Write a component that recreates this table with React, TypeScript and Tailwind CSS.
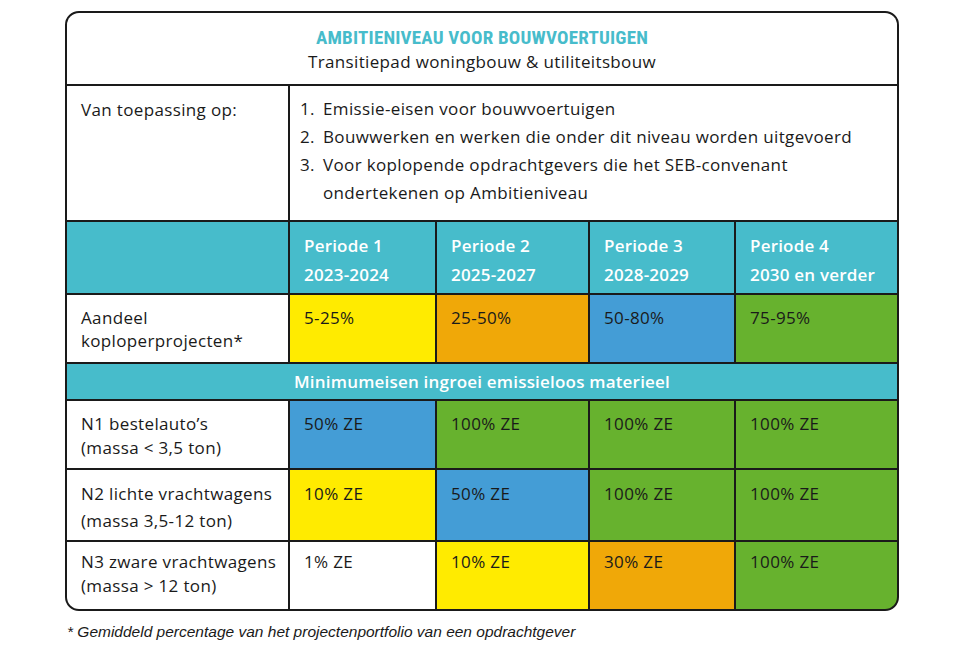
import React from "react";

const cyan = "bg-[#47bccb]";

function Cell({ className = "", children }: { className?: string; children?: React.ReactNode }) {
  return <div className={`pl-[14px] pr-1 ${className}`}>{children}</div>;
}

export default function App() {
  return (
    <div className="w-[960px] h-[665px] bg-white relative" style={{ fontFamily: '"Open Sans", "Liberation Sans", sans-serif' }}>
      <div className="pt-[11px] pl-[65px]">
        <div className="w-[834px] h-[600px] border-2 border-[#1a1a1a] rounded-[14px] overflow-hidden flex flex-col bg-[#1a1a1a]">
          <div className="h-[71px] bg-white flex flex-col items-center pt-[13px]">
            <div
              className="text-[#47bccb] font-bold text-[19px] leading-[24px] tracking-[0.2px]"
              style={{ fontFamily: '"Liberation Sans Narrow", "Roboto Condensed", "DejaVu Sans Condensed", sans-serif' }}
            >
              AMBITIENIVEAU VOOR BOUWVOERTUIGEN
            </div>
            <div className="text-[17px] tracking-[0.35px] leading-[24px] text-[#1a1a1a]">Transitiepad woningbouw &amp; utiliteitsbouw</div>
          </div>
          <div className="mt-[2px] grid grid-cols-[221px_145px_151px_144px_1fr] grid-rows-[134px_71px_67px_35px_67px_70px_67px] gap-[2px] text-[#1a1a1a] text-[17px] tracking-[0.35px]">
            <Cell className="bg-white pt-[10px] leading-[28px]">Van toepassing op:</Cell>
            <div className="col-span-4 bg-white pl-[10px] pt-[9px] leading-[28px]">
              <div className="flex"><span className="w-[23px]">1.</span><span>Emissie-eisen voor bouwvoertuigen</span></div>
              <div className="flex"><span className="w-[23px]">2.</span><span>Bouwwerken en werken die onder dit niveau worden uitgevoerd</span></div>
              <div className="flex"><span className="w-[23px] shrink-0">3.</span><span>Voor koplopende opdrachtgevers die het SEB-convenant<br />ondertekenen op Ambitieniveau</span></div>
            </div>

            <div className={cyan}></div>
            {[
              ["Periode 1", "2023-2024"],
              ["Periode 2", "2025-2027"],
              ["Periode 3", "2028-2029"],
              ["Periode 4", "2030 en verder"],
            ].map(([a, b]) => (
              <Cell key={a} className={`${cyan} text-white font-semibold pt-[9px] leading-[29px] tracking-[0.2px]`}>
                <div>{a}</div>
                <div className="whitespace-nowrap">{b}</div>
              </Cell>
            ))}

            <Cell className="bg-white pt-[11px] leading-[23px]">
              <div>Aandeel</div>
              <div>koploperprojecten*</div>
            </Cell>
            <Cell className="bg-[#ffeb00] pt-[11px] leading-[23px]">5-25%</Cell>
            <Cell className="bg-[#f0a808] pt-[11px] leading-[23px]">25-50%</Cell>
            <Cell className="bg-[#449dd6] pt-[11px] leading-[23px]">50-80%</Cell>
            <Cell className="bg-[#67b22e] pt-[11px] leading-[23px]">75-95%</Cell>

            <div className={`col-span-5 ${cyan} text-white font-semibold flex items-center justify-center leading-[24px] tracking-[0.2px]`}>
              Minimumeisen ingroei emissieloos materieel
            </div>

            <Cell className="bg-white pt-[11px] leading-[24px]">
              <div>N1 bestelauto’s</div>
              <div>(massa &lt; 3,5 ton)</div>
            </Cell>
            <Cell className="bg-[#449dd6] pt-[11px] leading-[24px]">50% ZE</Cell>
            <Cell className="bg-[#67b22e] pt-[11px] leading-[24px]">100% ZE</Cell>
            <Cell className="bg-[#67b22e] pt-[11px] leading-[24px]">100% ZE</Cell>
            <Cell className="bg-[#67b22e] pt-[11px] leading-[24px]">100% ZE</Cell>

            <Cell className="bg-white pt-[10px] leading-[27px]">
              <div className="whitespace-nowrap">N2 lichte vrachtwagens</div>
              <div>(massa 3,5-12 ton)</div>
            </Cell>
            <Cell className="bg-[#ffeb00] pt-[10px] leading-[27px]">10% ZE</Cell>
            <Cell className="bg-[#449dd6] pt-[10px] leading-[27px]">50% ZE</Cell>
            <Cell className="bg-[#67b22e] pt-[10px] leading-[27px]">100% ZE</Cell>
            <Cell className="bg-[#67b22e] pt-[10px] leading-[27px]">100% ZE</Cell>

            <Cell className="bg-white pt-[8px] leading-[24px]">
              <div className="whitespace-nowrap">N3 zware vrachtwagens</div>
              <div>(massa &gt; 12 ton)</div>
            </Cell>
            <Cell className="bg-white pt-[8px] leading-[24px]">1% ZE</Cell>
            <Cell className="bg-[#ffeb00] pt-[8px] leading-[24px]">10% ZE</Cell>
            <Cell className="bg-[#f0a808] pt-[8px] leading-[24px]">30% ZE</Cell>
            <Cell className="bg-[#67b22e] pt-[8px] leading-[24px]">100% ZE</Cell>
          </div>
        </div>
        <div
          className="mt-[12px] ml-[2px] italic text-[15.5px] leading-[18px] text-[#1a1a1a]"
          style={{ fontFamily: '"Liberation Sans", Arial, sans-serif' }}
        >
          * Gemiddeld percentage van het projectenportfolio van een opdrachtgever
        </div>
      </div>
    </div>
  );
}
